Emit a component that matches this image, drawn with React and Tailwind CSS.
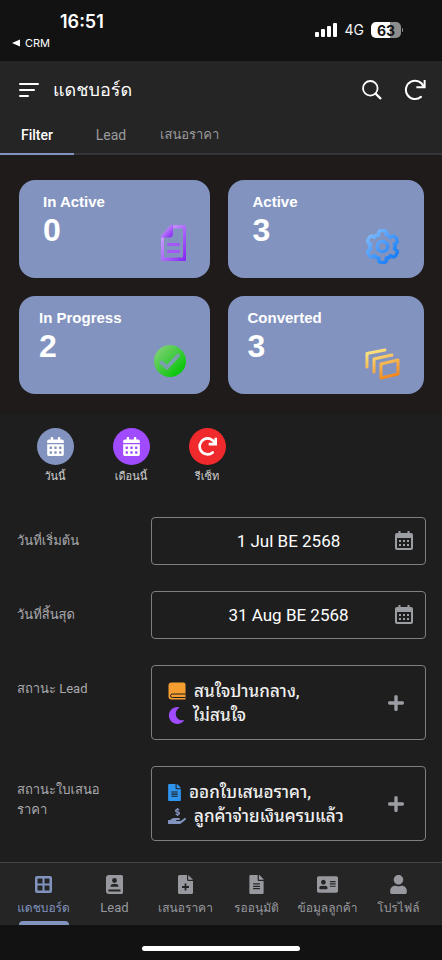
import { FaAddressCard, FaCalendarAlt, FaFileAlt, FaHandHoldingUsd, FaMoon, FaPlus, FaUser } from "react-icons/fa";

const cards = [
    { title: "In Active", value: 0, pad: "pl-6", Icon: DocIcon, iconPad: "right-[24px] bottom-[17px]" },
    { title: "Active", value: 3, pad: "pl-6", Icon: GearIcon, iconPad: "right-[24px] bottom-[14px]" },
    { title: "In Progress", value: 2, pad: "pl-5", Icon: CheckIcon, iconPad: "right-[24px] bottom-[17px]" },
    { title: "Converted", value: 3, pad: "pl-[19px]", Icon: StackIcon, iconPad: "right-[24px] bottom-[14px]" },
];

const tabs = ["Filter", "Lead", "เสนอราคา"];

const navItems = [
    { label: "แดชบอร์ด", icon: <GridIcon />, active: true },
    { label: "Lead", icon: <ContactBookIcon />, latin: true },
    { label: "เสนอราคา", icon: <FilePlusIcon /> },
    { label: "รออนุมัติ", icon: <FaFileAlt size={19} /> },
    { label: "ข้อมูลลูกค้า", icon: <FaAddressCard size={21} /> },
    { label: "โปรไฟล์", icon: <FaUser size={19} /> },
];

function DocIcon() {
    return (
        <svg width="25" height="36" viewBox="0 0 25 36" fill="none">
            <defs>
                <linearGradient id="doc" x1="0" y1="0" x2="1" y2="1">
                    <stop offset="0" stopColor="#d9b8ff" />
                    <stop offset="1" stopColor="#8420f5" />
                </linearGradient>
            </defs>
            <path
                fillRule="evenodd"
                fill="url(#doc)"
                d="M10 0H24Q25 0 25 1V35Q25 36 24 36H1Q0 36 0 35V11ZM11.500 3.500V9Q11.500 12 8.500 12H3V32.500H22V3.500Z"
            />
            <path fill="url(#doc)" d="M10 0H12V8.500Q12 12.500 8 12.500H0V11Z" />
            <path d="M7.500 19.500H17.500M7.500 26.500H17.500" stroke="#a558f8" strokeWidth="3.200" strokeLinecap="round" />
        </svg>
    );
}

// six-toothed outline, rounded through the midpoints of its corners
function gearPath() {
    const pts = [];
    for (let k = 0; k < 6; k++) {
        [[17, -15], [17, 15], [11.5, 17], [14, 30], [11.5, 43]].forEach(([r, off]) => {
            const a = ((k * 60 - 90 + off) * Math.PI) / 180;
            pts.push([18 + r * Math.cos(a), 18 + r * Math.sin(a)]);
        });
    }
    const mid = (p, q) => `${(p[0] + q[0]) / 2} ${(p[1] + q[1]) / 2}`;
    let d = `M${mid(pts[pts.length - 1], pts[0])}`;
    pts.forEach((p, i) => {
        d += `Q${p[0]} ${p[1]} ${mid(p, pts[(i + 1) % pts.length])}`;
    });
    return d + "Z";
}

function GearIcon() {
    return (
        <svg width="35" height="35" viewBox="0 0 36 36" fill="none" strokeWidth="3.500" strokeLinejoin="round" stroke="url(#gear)">
            <defs>
                <linearGradient id="gear" x1="4" y1="4" x2="32" y2="32" gradientUnits="userSpaceOnUse">
                    <stop offset="0" stopColor="#80bcff" />
                    <stop offset="0.900" stopColor="#1a7ff8" />
                </linearGradient>
            </defs>
            <circle cx="18" cy="18" r="5.300" />
            <path d={gearPath()} />
        </svg>
    );
}

function CheckIcon() {
    return (
        <svg width="32" height="32" viewBox="0 0 32 32" fill="none">
            <defs>
                <linearGradient id="check" x1="0" y1="0" x2="1" y2="1">
                    <stop offset="0.100" stopColor="#7fd077" />
                    <stop offset="0.800" stopColor="#0fc70f" />
                </linearGradient>
            </defs>
            <circle cx="16" cy="16" r="16" fill="url(#check)" />
            <path d="M7.500 17.500l5.500 5L24 10.500" stroke="#7b9fae" strokeWidth="4" strokeLinecap="round" />
        </svg>
    );
}

function StackIcon() {
    return (
        <svg width="36" height="32" viewBox="0 0 36 32" fill="none" stroke="url(#stack)" strokeWidth="3" strokeLinecap="round" strokeLinejoin="round">
            <defs>
                <linearGradient id="stack" x1="8" y1="0" x2="20" y2="32" gradientUnits="userSpaceOnUse">
                    <stop offset="0" stopColor="#fbe98a" />
                    <stop offset="0.500" stopColor="#f7bd55" />
                    <stop offset="1" stopColor="#f2861f" />
                </linearGradient>
            </defs>
            <path d="M3 19V5.500L21 2" />
            <path d="M10 24V11L28 7" />
            <path d="M17 16L34 12V26L17 30Z" />
        </svg>
    );
}

function RefreshIcon({ size, weight }) {
    return (
        <svg width={size} height={size} viewBox="0 0 24 24" fill="none" stroke="currentColor" strokeWidth={weight}>
            <path d="M18.500 19.500A10 10 0 1 1 21.500 8.500" strokeLinecap="round" />
            <path d="M22.500 1V9H13.500" />
        </svg>
    );
}

function CalendarIcon() {
    return (
        <svg width="18" height="20" viewBox="0 0 18 20">
            <path
                fill="currentColor"
                fillRule="evenodd"
                d="M3.500 0H5.500V2H12.500V0H14.500V2H16Q18 2 18 4V17Q18 19 16 19H2Q0 19 0 17V4Q0 2 2 2H3.500ZM2 7V16.500Q2 17 2.500 17H15.500Q16 17 16 16.500V7Z"
            />
            <path fill="currentColor" d="M4 9h2v2H4zM8 9h2v2H8zM12 9h2v2h-2zM4 13h2v2H4zM8 13h2v2H8zM12 13h2v2h-2z" />
        </svg>
    );
}

function BookIcon() {
    return (
        <svg width="18" height="18" viewBox="0 0 18 18">
            <path fill="#f59e2f" d="M3.500 0.500H15.500Q17.500 0.500 17.500 2.500V17.500H3.500Q0.500 17.500 0.500 14.500V3.500Q0.500 0.500 3.500 0.500Z" />
            <path d="M17.500 12H4.500Q2.500 12 2.500 13.700T4.500 15.500H17.500" fill="none" stroke="#1e1e1e" />
        </svg>
    );
}

function FileIcon() {
    return (
        <svg width="13" height="17" viewBox="0 0 384 512" fill="#2f94ee">
            <path d="M224 136V0H24C10.700 0 0 10.700 0 24v464c0 13.300 10.700 24 24 24h336c13.300 0 24-10.700 24-24V160H248c-13.200 0-24-10.800-24-24zm64 248H96v-32h192zm0-64H96v-32h192zm0-64H96v-32h192zM377 105L279.100 7c-4.500-4.500-10.600-7-17-7H256v128h128v-6.100c0-6.300-2.500-12.400-7-16.900z" />
        </svg>
    );
}

function GridIcon() {
    return (
        <svg width="17" height="17" viewBox="0 0 17 17">
            <path
                fill="currentColor"
                fillRule="evenodd"
                d="M2 0H15Q17 0 17 2V15Q17 17 15 17H2Q0 17 0 15V2Q0 0 2 0ZM2.500 2.500V7.500H7.500V2.500ZM9.500 2.500V7.500H14.500V2.500ZM2.500 9.500V14.500H7.500V9.500ZM9.500 9.500V14.500H14.500V9.500Z"
            />
        </svg>
    );
}

function ContactBookIcon() {
    return (
        <svg width="17" height="19" viewBox="0 0 17 19">
            <path fill="currentColor" d="M3 0H15.500Q17 0 17 1.500V17.500Q17 19 15.500 19H3Q0 19 0 16V3Q0 0 3 0Z" />
            <circle cx="8.500" cy="5.500" r="2.400" fill="#252525" />
            <path fill="#252525" d="M4.500 11.800Q4.500 9 7 9H10Q12.500 9 12.500 11.800ZM3 14.500H14.500V16.500H3Q2.200 16.500 2.200 15.500T3 14.500Z" />
        </svg>
    );
}

function FilePlusIcon() {
    return (
        <svg width="15" height="19" viewBox="0 0 15 19">
            <path fill="currentColor" d="M1.500 0H9V4.500Q9 6 10.500 6H15V17.500Q15 19 13.500 19H1.500Q0 19 0 17.500V1.500Q0 0 1.500 0ZM10.200 0L15 4.800H10.200Z" />
            <path d="M7.500 8.500V15.500M4 12H11" stroke="#252525" strokeWidth="1.800" />
        </svg>
    );
}

function StatusBar() {
    return (
        <div className="flex h-[61px] items-start justify-between bg-[#121212] pl-3 pr-[39px] font-[Inter,sans-serif] text-white">
            <div className="pt-3">
                <div className="pl-12 text-[18px] font-semibold leading-5">16:51</div>
                <a href="#" className="flex items-center gap-1 pt-[3px] text-[11px] leading-4">
                    <svg width="9" height="8" viewBox="0 0 9 8" fill="currentColor"><path d="M0 4L8 0.500V7.500Z" /></svg>
                    CRM
                </a>
            </div>
            <div className="flex items-center gap-[7px] pt-5">
                <svg width="23" height="14" viewBox="0 0 23 14" fill="currentColor">
                    <rect x="0" y="9" width="4" height="5" rx="1" />
                    <rect x="6" y="6" width="4" height="8" rx="1" />
                    <rect x="12" y="3" width="4" height="11" rx="1" />
                    <rect x="18" y="0" width="4" height="14" rx="1" />
                </svg>
                <span className="text-[14px] leading-5 text-gray-100">4G</span>
                <div className="flex items-center gap-px">
                    <span className="flex h-4 w-[30px] items-center justify-center rounded-[5px] bg-linear-to-r from-white from-63% to-[#8c8c8c] to-63% text-[14px] font-bold text-[#121212]">63</span>
                    <span className="h-1 w-px rounded-r bg-[#8c8c8c]" />
                </div>
            </div>
        </div>
    );
}

function Header() {
    return (
        <header className="border-b-2 border-[#353538] bg-[#252525]">
            <div className="flex h-[58px] items-center pl-[19px] pr-4 text-white">
                <button aria-label="Menu">
                    <svg width="20" height="16" viewBox="0 0 20 16" stroke="currentColor" strokeWidth="2">
                        <path d="M1 2H19M1 8H15M1 14H9" strokeLinecap="round" />
                    </svg>
                </button>
                <h1 className="flex-1 pl-[14px] text-[18px] leading-7">แดชบอร์ด</h1>
                <button aria-label="Search" className="pr-[22px]">
                    <svg width="20" height="20" viewBox="0 0 20 20" fill="none" stroke="currentColor" strokeWidth="1.800">
                        <circle cx="8.300" cy="8.300" r="7.300" />
                        <path d="M13.500 13.500L19 19" strokeWidth="2.400" />
                    </svg>
                </button>
                <button aria-label="Refresh"><RefreshIcon size={22} weight={2.2} /></button>
            </div>
            <nav className="-mb-0.5 flex h-9 leading-5">
                {tabs.map((tab, i) => (
                    <button
                        key={tab}
                        className={
                            i === 0
                                ? "w-[74px] border-b-2 border-[#8293bf] pb-0.5 text-[14px] font-medium text-white"
                                : i === 1
                                    ? "w-[74px] border-b-2 border-transparent pb-0.5 text-[14px] text-[#9a9a9a]"
                                    : "border-b-2 border-transparent px-3 pb-0.5 text-[13px] text-[#9a9a9a]"
                        }
                    >
                        {tab}
                    </button>
                ))}
            </nav>
        </header>
    );
}

function Cards() {
    return (
        <section className="grid grid-cols-[191fr_195fr] gap-[18px] bg-[#1f1b1b] pb-5 pl-[19px] pr-[18px] pt-[25px] font-['Liberation_Sans',sans-serif] font-bold text-white">
            {cards.map(({ title, value, pad, Icon, iconPad }) => (
                <div key={title} className="relative h-[98px] rounded-2xl bg-[#8293bf]">
                    <div className={pad}>
                        <div className="pt-3 text-[15px] leading-5">{title}</div>
                        <div className="text-[32px] leading-9">{value}</div>
                    </div>
                    <span className={"absolute " + iconPad}><Icon /></span>
                </div>
            ))}
        </section>
    );
}

function QuickButton({ label, color, children }) {
    return (
        <button className="flex w-[76px] flex-col items-center gap-1 text-[11px] leading-4 text-[#d0d0d0]">
            <span className={"flex size-[37px] items-center justify-center rounded-full text-white " + color}>{children}</span>
            {label}
        </button>
    );
}

function DateField({ id, label, value }) {
    return (
        <div className="flex items-start">
            <label htmlFor={id} className="w-[134px] shrink-0 py-[14px] pr-9 text-[13px] leading-5 text-[#a9a9ad]">{label}</label>
            <div className="relative flex-1">
                <input id={id} type="text" defaultValue={value} className="block h-12 w-full rounded border border-[#7d7f83] bg-transparent text-center text-[17px] text-white" />
                <button aria-label={label} className="absolute right-[13px] top-[14px] text-[#9a9da2]"><CalendarIcon /></button>
            </div>
        </div>
    );
}

function StatusField({ label, children }) {
    return (
        <div className="flex items-start">
            <div className="w-[134px] shrink-0 py-[14px] pr-9 text-[13px] leading-5 text-[#a9a9ad]">{label}</div>
            <button aria-label={label} className="flex flex-1 items-center justify-between rounded border border-[#7d7f83] py-3 pl-4 pr-5 text-left font-[Roboto,'Noto_Sans_Thai_Looped',Loma,sans-serif] text-[17px] font-medium leading-6 text-[#f0f0f0]">
                <span className="pt-px">{children}</span>
                <FaPlus size={18} className="text-[#9a9da2]" />
            </button>
        </div>
    );
}

function BottomNav() {
    return (
        <nav className="grid h-[63px] grid-cols-6 border-t border-[#46464a] bg-[#252525] px-2">
            {navItems.map(({ label, icon, active, latin }) => (
                <a
                    key={label}
                    href="#"
                    className={
                        active
                            ? "flex flex-col items-center pt-[11px] text-[#8293bf]"
                            : "flex flex-col items-center pt-[11px] text-[#97999e]"
                    }
                >
                    <span className="flex h-5 items-center">{icon}</span>
                    <span className={latin ? "pt-1 text-[13px] leading-5" : "whitespace-nowrap pt-1 text-[12px] leading-5"}>{label}</span>
                    {active && <span className="mt-auto h-1 w-[50px] rounded-t bg-[#8293bf]" />}
                </a>
            ))}
        </nav>
    );
}

export default function App() {
    return (
        <div className="flex min-h-screen flex-col bg-[#1e1e1e] font-[Roboto,Loma,'Noto_Sans_Thai',sans-serif]">
            <StatusBar />
            <Header />
            <main className="flex-1">
                <Cards />
                <section className="flex pb-8 pl-[17px] pt-[14px]">
                    <QuickButton label="วันนี้" color="bg-[#8293bf]"><FaCalendarAlt size={19} /></QuickButton>
                    <QuickButton label="เดือนนี้" color="bg-[#a14bff]"><FaCalendarAlt size={19} /></QuickButton>
                    <QuickButton label="รีเซ็ท" color="bg-[#f0292c]"><RefreshIcon size={19} weight={3.4} /></QuickButton>
                </section>
                <section className="flex flex-col gap-[26px] pl-[17px] pr-4">
                    <DateField id="start" label="วันที่เริ่มต้น" value="1 Jul BE 2568" />
                    <DateField id="end" label="วันที่สิ้นสุด" value="31 Aug BE 2568" />
                    <StatusField label="สถานะ Lead">
                        <span className="flex items-center gap-2"><BookIcon />สนใจปานกลาง,</span>
                        <span className="flex items-center gap-2"><FaMoon size={17} className="text-[#a14bff]" />ไม่สนใจ</span>
                    </StatusField>
                    <StatusField label="สถานะใบเสนอราคา">
                        <span className="flex items-center gap-2"><FileIcon />ออกใบเสนอราคา,</span>
                        <span className="flex items-center gap-2"><FaHandHoldingUsd size={18} className="text-[#8293bf]" />ลูกค้าจ่ายเงินครบแล้ว</span>
                    </StatusField>
                </section>
            </main>
            <BottomNav />
            <footer className="flex h-[35px] items-center justify-center bg-[#121212] pt-3">
                <span className="h-[5px] w-[158px] rounded-full bg-white" />
            </footer>
        </div>
    );
}
